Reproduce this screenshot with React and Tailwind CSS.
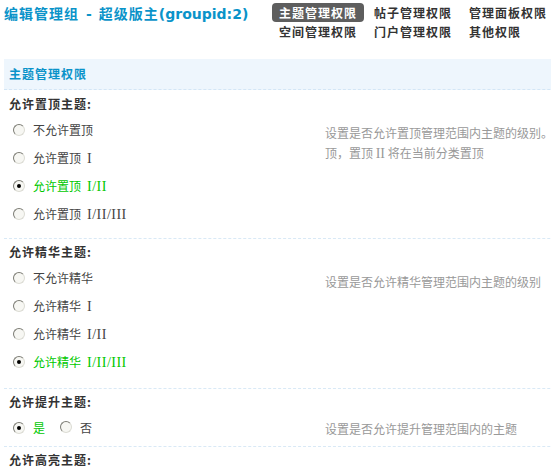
import React from "react";

const CJK = "font-['Noto_Sans_CJK_SC',sans-serif]";

function Radio({ checked }) {
  return (
    <span className="inline-flex h-[12px] w-[12px] shrink-0 items-center justify-center rounded-full border border-t-[#7c7c74] border-l-[#7c7c74] border-r-[#dcdcd4] border-b-[#dcdcd4] bg-[#f7f7f3]">
      {checked && <span className="h-[4px] w-[4px] rounded-full bg-black" />}
    </span>
  );
}

function Roman({ children, green }) {
  return (
    <span
      className={`ml-[6px] font-['Liberation_Serif',serif] text-[14px] tracking-[0.5px] ${
        green ? "text-[#00c800]" : "text-[#444]"
      }`}
    >
      {children}
    </span>
  );
}

function Option({ label, level, checked }) {
  return (
    <div className="flex h-[28px] items-center pl-[9px]">
      <Radio checked={checked} />
      <span className={`ml-[8px] text-[12px] ${checked ? "text-[#00c800]" : "text-[#444]"}`}>{label}</span>
      {level && <Roman green={checked}>{level}</Roman>}
    </div>
  );
}

function Label({ children }) {
  return (
    <div className="h-[20px] pl-[5px] text-[12px] font-bold leading-[20px] tracking-[1px] text-[#333]">
      {children}
    </div>
  );
}

const tabs = [
  ["主题管理权限", true],
  ["帖子管理权限", false],
  ["管理面板权限", false],
  ["空间管理权限", false],
  ["门户管理权限", false],
  ["其他权限", false],
];

export default function App() {
  return (
    <div className={`w-full overflow-hidden bg-white ${CJK}`}>
      <div className="w-[640px] pl-[4px]">
        {/* page heading and permission tabs */}
        <div className="flex h-[59px]">
          <div className="w-[268px] shrink-0 pt-[3px] text-[14px] font-bold leading-[20px] text-[#0a93c9]">
            <span className="tracking-[1px]">编辑管理组</span>
            <span className="px-[7px] font-['DejaVu_Sans',sans-serif]">-</span>
            <span className="tracking-[1px]">超级版主</span>
            <span className="font-['DejaVu_Sans',sans-serif]">(groupid:2)</span>
          </div>
          <div className="grid grid-cols-[92px_92px_92px] content-start gap-x-[3px] pt-[3px]">
            {tabs.map(([name, active]) => (
              <div
                key={name}
                className={`h-[19px] rounded-[4px] px-[7px] text-[12px] font-bold leading-[19px] tracking-[1px] ${
                  active ? "bg-[#5e5e5e] text-white" : "text-[#333]"
                }`}
              >
                {name}
              </div>
            ))}
          </div>
        </div>

        {/* section title */}
        <div className="h-[31px] border-b border-dashed border-[#d3e6f6] bg-[#eef6fd] pl-[5px] text-[12px] font-bold leading-[30px] tracking-[1px] text-[#0a93c9]">
          主题管理权限
        </div>

        {/* sticky threads */}
        <div className="border-b border-dashed border-[#d9e9f6] pt-[4px] pb-[10px]">
          <Label>允许置顶主题:</Label>
          <div className="mt-[2px] flex">
            <div className="w-[321px] shrink-0">
              <Option label="不允许置顶" />
              <Option label="允许置顶" level="I" />
              <Option label="允许置顶" level="I/II" checked />
              <Option label="允许置顶" level="I/II/III" />
            </div>
            <div className="pt-[7px] text-[12px] leading-[20px] text-[#999]">
              <div className="whitespace-nowrap">设置是否允许置顶管理范围内主题的级别。</div>
              <div className="whitespace-nowrap">
                顶，置顶 <span className="font-['Liberation_Serif',serif] text-[14px]">II</span> 将在当前分类置顶
              </div>
            </div>
          </div>
        </div>

        {/* digest threads */}
        <div className="border-b border-dashed border-[#d9e9f6] pt-[3px] pb-[12px]">
          <Label>允许精华主题:</Label>
          <div className="mt-[2px] flex">
            <div className="w-[321px] shrink-0">
              <Option label="不允许精华" />
              <Option label="允许精华" level="I" />
              <Option label="允许精华" level="I/II" />
              <Option label="允许精华" level="I/II/III" checked />
            </div>
            <div className="whitespace-nowrap pt-[8px] text-[12px] leading-[20px] text-[#999]">
              设置是否允许精华管理范围内主题的级别
            </div>
          </div>
        </div>

        {/* bump threads */}
        <div className="border-b border-dashed border-[#d9e9f6] pt-[3px] pb-[4px]">
          <Label>允许提升主题:</Label>
          <div className="mt-[2px] flex">
            <div className="flex h-[28px] w-[321px] shrink-0 items-center pl-[9px] text-[12px]">
              <Radio checked />
              <span className="ml-[8px] text-[#00c800]">是</span>
              <span className="ml-[15px]">
                <Radio />
              </span>
              <span className="ml-[8px] text-[#444]">否</span>
            </div>
            <div className="whitespace-nowrap pt-[5px] text-[12px] leading-[20px] text-[#999]">
              设置是否允许提升管理范围内的主题
            </div>
          </div>
        </div>

        {/* highlight threads */}
        <div className="pt-[3px]">
          <Label>允许高亮主题:</Label>
        </div>
      </div>
    </div>
  );
}
